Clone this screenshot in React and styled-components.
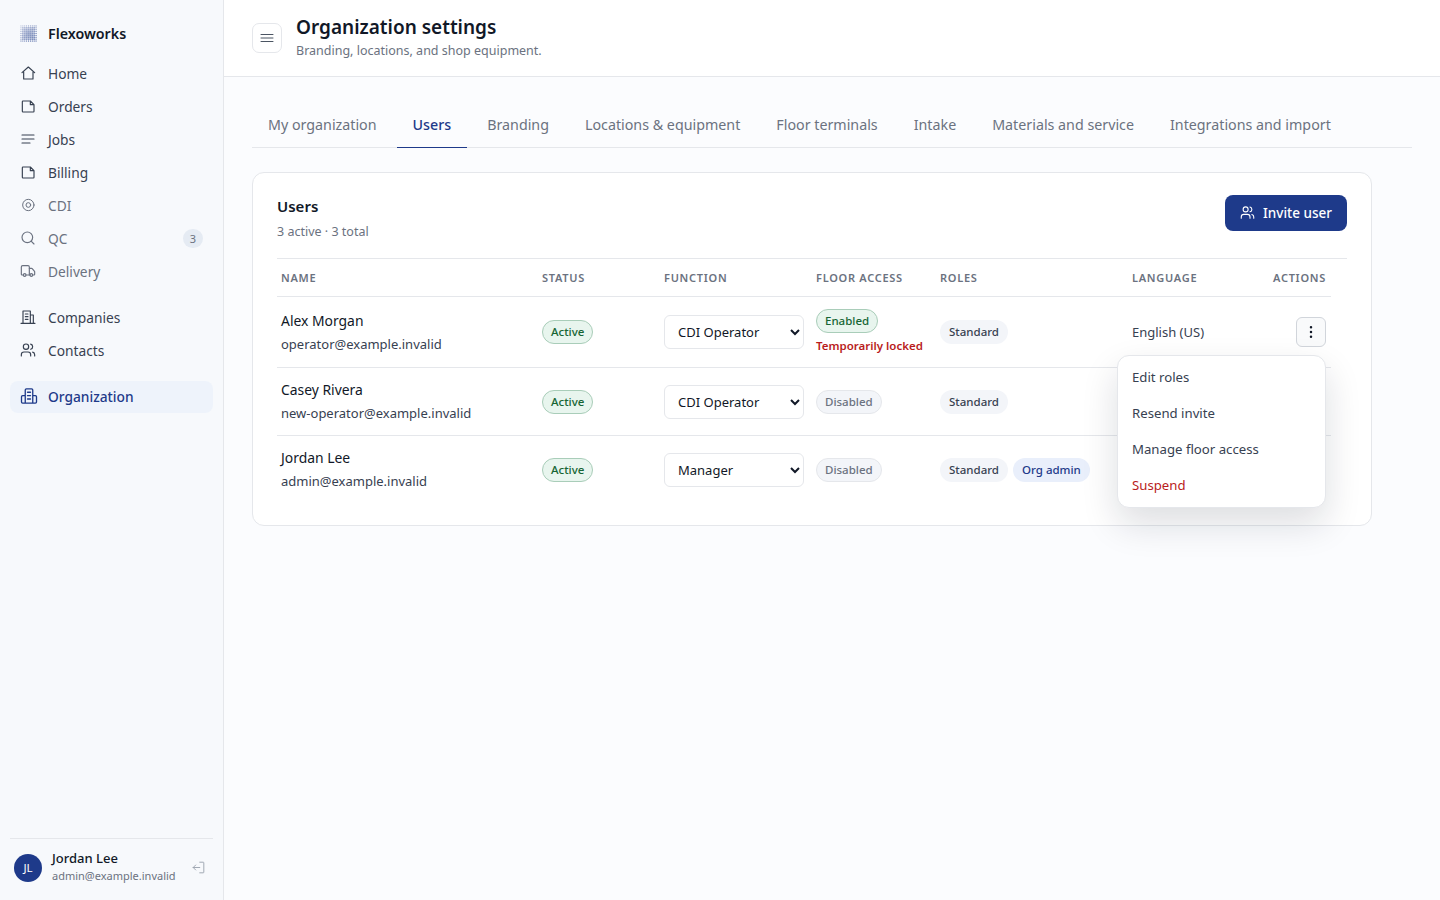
import React from 'react';
import styled, { createGlobalStyle } from 'styled-components';
import { Search, Truck, Users, MoreVertical } from 'lucide-react';

const GlobalStyle = createGlobalStyle`
  html, body { margin: 0; padding: 0; height: 100%; }
  body {
    font-family: "Noto Sans", "Open Sans", sans-serif;
    background: #fbfcfe;
    color: #111827;
  }
  * { box-sizing: border-box; }
`;

// <Icon>: shared wrapper for hand drawn nav icons
const Icon = ({ size = 16, width = 1.75, children }) => (
  <svg width={size} height={size} viewBox="0 0 24 24" fill="none" stroke="currentColor"
    strokeWidth={width} strokeLinecap="round" strokeLinejoin="round">
    {children}
  </svg>
);

const HouseIcon = () => <Icon><path d="M3 11.5 12.5 3 22 11.5M5.5 10V21H19.5V10" /></Icon>;
const PageIcon = () => <Icon><path d="M4.5 4.5H15.5L21 10V20A1 1 0 0 1 20 21H4.5A1 1 0 0 1 3.5 20V5.5A1 1 0 0 1 4.5 4.5ZM15.5 4.5V10H21" /></Icon>;
const LinesIcon = () => <Icon><path d="M3 6H21M3 12H21M3 18H15" /></Icon>;
const TargetIcon = () => (
  <Icon width={1.5}>
    <circle cx="12.5" cy="12" r="8.5" />
    <circle cx="12.5" cy="12" r="3.5" />
  </Icon>
);
const BuildingIcon = () => (
  <Icon>
    <path d="M1.5 21.5H22.5M4.5 21.5V3H15.5V21.5M15.5 9H20V21.5M8 7.5H12M8 11.5H12M8 15.5H12" />
  </Icon>
);
const OrgIcon = () => (
  <Icon size={18}>
    <path d="M7 21.5V4A1.5 1.5 0 0 1 8.5 2.5H15.5A1.5 1.5 0 0 1 17 4V21.5M7 11.5H3.5A1.5 1.5 0 0 0 2 13V20A1.5 1.5 0 0 0 3.5 21.5H20.5A1.5 1.5 0 0 0 22 20V13A1.5 1.5 0 0 0 20.5 11.5H17M10 7H14M10 11.5H14M10 16H14" />
  </Icon>
);
const LeaveIcon = () => (
  <Icon size={15} width={1.5}>
    <path d="M14 3.5H19.5A1 1 0 0 1 20.5 4.5V19.5A1 1 0 0 1 19.5 20.5H14M14 12H3.5M7.5 8 3.5 12 7.5 16" />
  </Icon>
);
const BarsIcon = () => <Icon width={1.5}><path d="M3 6.75H21M3 12H21M3 17.25H21" /></Icon>;

// halftone square: small dark dots at the rim, soft fill in the middle, darker to the lower right
const LogoMark = () => {
  const dots = [];
  for (let y = 0; y < 9; y++) {
    for (let x = 0; x < 9; x++) {
      const edge = Math.min(x, y, 8 - x, 8 - y);
      const size = edge === 0 ? 1 : 1.5 + edge * 0.12;
      const alpha = edge === 0 ? 0.35 + (x + y) * 0.045 : 0.27 + (x + y) * 0.025;
      dots.push(
        <rect key={x + '-' + y} x={x * 2 + 1 - size / 2} y={y * 2 + 1 - size / 2}
          width={size} height={size} fill="#1e3a8a" opacity={alpha} />
      );
    }
  }
  return <svg width="17" height="17" viewBox="0 0 18 18">{dots}</svg>;
};

const NAV_TOP = [
  { label: 'Home', icon: <HouseIcon /> },
  { label: 'Orders', icon: <PageIcon /> },
  { label: 'Jobs', icon: <LinesIcon /> },
  { label: 'Billing', icon: <PageIcon /> },
  { label: 'CDI', icon: <TargetIcon />, muted: true },
  { label: 'QC', icon: <Search size={16} strokeWidth={1.75} />, muted: true, badge: 3 },
  { label: 'Delivery', icon: <Truck size={16} strokeWidth={1.75} />, muted: true },
];

const TABS = ['My organization', 'Users', 'Branding', 'Locations & equipment', 'Floor terminals', 'Intake', 'Materials and service', 'Integrations and import'];

const USERS = [
  { name: 'Alex Morgan', email: 'operator@example.invalid', fn: 'CDI Operator', floor: 'Enabled', locked: true, roles: ['Standard'] },
  { name: 'Casey Rivera', email: 'new-operator@example.invalid', fn: 'CDI Operator', floor: 'Disabled', roles: ['Standard'] },
  { name: 'Jordan Lee', email: 'admin@example.invalid', fn: 'Manager', floor: 'Disabled', roles: ['Standard', 'Org admin'] },
];

export default function App() {
  return (
    <Shell>
      <GlobalStyle />
      <Sidebar>
        <Brand><LogoMark /><span>Flexoworks</span></Brand>
        <NavGroup>
          {NAV_TOP.map((item) => (
            <NavItem key={item.label} $muted={item.muted}>
              {item.icon}
              <span>{item.label}</span>
              {item.badge && <NavBadge>{item.badge}</NavBadge>}
            </NavItem>
          ))}
        </NavGroup>
        <NavGroup>
          <NavItem><BuildingIcon /><span>Companies</span></NavItem>
          <NavItem><Users size={16} strokeWidth={1.75} /><span>Contacts</span></NavItem>
        </NavGroup>
        <NavGroup>
          <NavItem $active><OrgIcon /><span>Organization</span></NavItem>
        </NavGroup>
        <SideFooter>
          <Avatar>JL</Avatar>
          <FooterText>
            <FooterName>Jordan Lee</FooterName>
            <FooterMail>admin@example.invalid</FooterMail>
          </FooterText>
          <LeaveButton><LeaveIcon /></LeaveButton>
        </SideFooter>
      </Sidebar>

      <Content>
        <TopBar>
          <MenuButton><BarsIcon /></MenuButton>
          <TitleBlock>
            <PageTitle>Organization settings</PageTitle>
            <PageSub>Branding, locations, and shop equipment.</PageSub>
          </TitleBlock>
        </TopBar>

        <Main>
          <Tabs>
            {TABS.map((t) => <Tab key={t} $active={t === 'Users'}>{t}</Tab>)}
          </Tabs>

          <Card>
            <CardHead>
              <div>
                <CardTitle>Users</CardTitle>
                <CardSub>3 active · 3 total</CardSub>
              </div>
              <InviteButton><Users size={15} strokeWidth={1.75} />Invite user</InviteButton>
            </CardHead>

            <TableWrap>
              <Table>
                <colgroup>
                  <col style={{ width: 261 }} />
                  <col style={{ width: 122 }} />
                  <col style={{ width: 152 }} />
                  <col style={{ width: 124 }} />
                  <col style={{ width: 192 }} />
                  <col style={{ width: 203 }} />
                </colgroup>
                <thead>
                  <tr>
                    <Th>Name</Th>
                    <Th>Status</Th>
                    <Th>Function</Th>
                    <Th>Floor access</Th>
                    <Th>Roles</Th>
                    <LastTh>
                      <LangHead>
                        <span>Language</span>
                        <span>Actions</span>
                      </LangHead>
                    </LastTh>
                  </tr>
                </thead>
                <tbody>
                  {USERS.map((u, i) => (
                    <Row key={u.email}>
                      <NameTd>
                        <UserName>{u.name}</UserName>
                        <UserMail>{u.email}</UserMail>
                      </NameTd>
                      <Td><Pill $tone="green">Active</Pill></Td>
                      <Td>
                        <FunctionSelect defaultValue={u.fn}>
                          <option>CDI Operator</option>
                          <option>Manager</option>
                        </FunctionSelect>
                      </Td>
                      <Td>
                        <Pill $tone={u.floor === 'Enabled' ? 'green' : 'gray'}>{u.floor}</Pill>
                        {u.locked && <LockNote>Temporarily locked</LockNote>}
                      </Td>
                      <Td>
                        <RoleList>
                          {u.roles.map((r) => <Role key={r} $admin={r === 'Org admin'}>{r}</Role>)}
                        </RoleList>
                      </Td>
                      <LastTd>
                        {/* the open menu covers this cell on the other rows */}
                        {i === 0 && (
                          <LangCell>
                            <span>English (US)</span>
                            <ActionWrap>
                              <KebabButton><MoreVertical size={16} strokeWidth={1.75} /></KebabButton>
                              <RowMenu>
                                <MenuItem>Edit roles</MenuItem>
                                <MenuItem>Resend invite</MenuItem>
                                <MenuItem>Manage floor access</MenuItem>
                                <MenuItem $danger>Suspend</MenuItem>
                              </RowMenu>
                            </ActionWrap>
                          </LangCell>
                        )}
                      </LastTd>
                    </Row>
                  ))}
                </tbody>
              </Table>
            </TableWrap>
          </Card>
        </Main>
      </Content>
    </Shell>
  );
}

// styles
const Shell = styled.div`
  display: flex;
  height: 100vh;
  overflow: hidden;
`;

const Sidebar = styled.aside`
  width: 224px;
  flex: none;
  display: flex;
  flex-direction: column;
  padding: 0 10px;
  background: #f7f9fc;
  border-right: 1px solid #e5e7eb;
`;

const Brand = styled.div`
  display: flex;
  align-items: center;
  gap: 11px;
  height: 57px;
  padding: 9px 0 0 10px;
  font-size: 14.25px;
  font-weight: 600;
  color: #111827;
`;

const NavGroup = styled.nav`
  display: flex;
  flex-direction: column;
  gap: 1px;
  margin-bottom: 14px;
`;

const NavItem = styled.div`
  display: flex;
  align-items: center;
  gap: 12px;
  height: 32px;
  padding: ${(p) => (p.$active ? '0 10px 2px' : '0 10px')};
  margin-top: ${(p) => (p.$active ? '1px' : '0')};
  border-radius: 8px;
  font-size: 13.75px;
  color: ${(p) => (p.$active ? '#1e3a8a' : p.$muted ? '#6b7280' : '#374151')};
  background: ${(p) => (p.$active ? '#eef3fb' : 'transparent')};
  font-weight: ${(p) => (p.$active ? 500 : 400)};
  svg { flex: none; margin-right: ${(p) => (p.$active ? '-2px' : '0')}; }
`;

const NavBadge = styled.span`
  margin-left: auto;
  width: 20px;
  height: 19px;
  border-radius: 10px;
  background: #e5ebf3;
  color: #6b7280;
  font-size: 11px;
  line-height: 19px;
  text-align: center;
`;

const SideFooter = styled.div`
  margin-top: auto;
  height: 62px;
  display: flex;
  align-items: center;
  gap: 10px;
  padding: 0 7px 4px 4px;
  border-top: 1px solid #e5e7eb;
`;

const Avatar = styled.div`
  width: 28px;
  height: 28px;
  flex: none;
  border-radius: 50%;
  background: #1e3a8a;
  color: #fff;
  font-size: 11.5px;
  line-height: 28px;
  text-align: center;
`;

const FooterText = styled.div`
  flex: 1;
  min-width: 0;
  margin-bottom: 3px;
`;

const FooterName = styled.div`
  font-size: 13px;
  font-weight: 500;
  line-height: 18px;
  color: #111827;
`;

const FooterMail = styled.div`
  margin-top: 1px;
  font-size: 11px;
  line-height: 16px;
  color: #6b7280;
  white-space: nowrap;
`;

const LeaveButton = styled.div`
  display: flex;
  color: #9ca3af;
`;

const Content = styled.div`
  flex: 1;
  min-width: 0;
  display: flex;
  flex-direction: column;
`;

const TopBar = styled.header`
  height: 77px;
  flex: none;
  display: flex;
  align-items: center;
  gap: 14px;
  padding: 0 28px;
  background: #fff;
  border-bottom: 1px solid #e5e7eb;
`;

const MenuButton = styled.div`
  width: 30px;
  height: 30px;
  display: flex;
  align-items: center;
  justify-content: center;
  border: 1px solid #e5e7eb;
  border-radius: 7px;
  background: #fff;
  color: #4b5563;
`;

const TitleBlock = styled.div`
  padding-bottom: 3px;
`;

const PageTitle = styled.h1`
  margin: 0;
  font-size: 19px;
  font-weight: 600;
  line-height: 26px;
  color: #111827;
`;

const PageSub = styled.p`
  margin: 1.5px 0 0;
  font-size: 12.5px;
  line-height: 17px;
  color: #6b7280;
`;

const Main = styled.main`
  flex: 1;
  padding: 23px 28px 0;
`;

const Tabs = styled.div`
  display: flex;
  gap: 4px;
  border-bottom: 1px solid #e5e7eb;
`;

const Tab = styled.div`
  height: 48px;
  padding: 0 16px;
  display: flex;
  align-items: center;
  font-size: 14.27px;
  font-weight: ${(p) => (p.$active ? 500 : 400)};
  color: ${(p) => (p.$active ? '#1e3a8a' : '#6b7280')};
  box-shadow: ${(p) => (p.$active ? 'inset 0 -1px 0 #1e3a8a' : 'none')};
  margin-bottom: -1px;
`;

const Card = styled.section`
  width: 1120px;
  margin-top: 24px;
  padding: 22px 24px 22px;
  background: #fff;
  border: 1px solid #e5e7eb;
  border-radius: 12px;
`;

const CardHead = styled.div`
  display: flex;
  justify-content: space-between;
  align-items: flex-start;
  height: 63px;
`;

const CardTitle = styled.h2`
  margin: 0;
  padding-top: 1px;
  font-size: 15px;
  font-weight: 600;
  line-height: 20px;
  color: #111827;
`;

const CardSub = styled.p`
  margin: 7px 0 0;
  font-size: 12.5px;
  line-height: 18px;
  color: #6b7280;
`;

const InviteButton = styled.button`
  height: 36px;
  width: 122px;
  padding: 0 0 1px;
  display: flex;
  align-items: center;
  justify-content: center;
  gap: 8px;
  border: none;
  border-radius: 8px;
  background: #1e3a8a;
  color: #fff;
  font-family: inherit;
  font-size: 13.5px;
  font-weight: 500;
`;

const TableWrap = styled.div`
  border-top: 1px solid #e5e7eb;
`;

const Table = styled.table`
  width: 1054px;
  table-layout: fixed;
  border-collapse: collapse;
`;

const Th = styled.th`
  height: 37px;
  padding: 0 4px;
  text-align: left;
  font-size: 11px;
  font-weight: 600;
  letter-spacing: 0.72px;
  text-transform: uppercase;
  color: #6b7280;
  border-bottom: 1px solid #e5e7eb;
`;

const LastTh = styled(Th)`
  padding-right: 5px;
`;

const LangHead = styled.div`
  display: flex;
  justify-content: space-between;
`;

const Row = styled.tr`
  border-bottom: 1px solid #e5e7eb;
  &:last-child { border-bottom: none; }
`;

const NameTd = styled.td`
  height: 68px;
  padding: 0 4px;
  vertical-align: middle;
  ${Row}:first-child & { height: 71px; }
`;

const Td = styled(NameTd)`
  font-size: 13px;
  color: #374151;
  ${Row}:not(:first-child) & { padding-top: 2px; }
`;

const LastTd = styled(Td)`
  padding-right: 5px;
`;

const UserName = styled.div`
  font-size: 13.9px;
  line-height: 20px;
  color: #111827;
`;

const UserMail = styled.div`
  margin-top: 4px;
  font-size: 13px;
  line-height: 18px;
  color: #374151;
`;

const TONES = {
  green: 'background:#e8f5ee;border-color:#a9cdb9;color:#166534;',
  gray: 'background:#f3f5f9;border-color:#e5e7eb;color:#6b7280;',
};

const Pill = styled.span`
  display: inline-block;
  height: 24px;
  padding: 0 8px;
  border: 1px solid;
  border-radius: 12px;
  font-size: 11.5px;
  font-weight: 500;
  line-height: 22px;
  ${(p) => TONES[p.$tone]}
`;

const LockNote = styled.div`
  margin-top: 5px;
  font-size: 11.5px;
  font-weight: 600;
  line-height: 16px;
  color: #b91c1c;
  white-space: nowrap;
`;

const FunctionSelect = styled.select`
  width: 140px;
  height: 34px;
  padding: 0 0 0 9px;
  border: 1px solid #e5e7eb;
  border-radius: 6px;
  background: #fff;
  color: #111827;
  font-family: inherit;
  font-size: 13px;
`;

const RoleList = styled.div`
  display: flex;
  gap: 5px;
`;

const Role = styled.span`
  height: 24px;
  padding: 0 9px;
  border-radius: 12px;
  font-size: 11.5px;
  font-weight: 500;
  line-height: 24px;
  background: ${(p) => (p.$admin ? '#e9effb' : '#f3f5f9')};
  color: ${(p) => (p.$admin ? '#1e3a8a' : '#374151')};
`;

const LangCell = styled.div`
  display: flex;
  align-items: center;
  justify-content: space-between;
`;

const ActionWrap = styled.div`
  position: relative;
`;

const KebabButton = styled.div`
  width: 30px;
  height: 30px;
  display: flex;
  align-items: center;
  justify-content: center;
  border: 1px solid #d1d5db;
  border-radius: 6px;
  background: #f9fafb;
  color: #111827;
`;

const RowMenu = styled.div`
  position: absolute;
  z-index: 5;
  top: 38px;
  right: 0;
  width: 209px;
  padding: 3px 0 4px;
  background: #fff;
  border: 1px solid #e5e7eb;
  border-radius: 12px;
  box-shadow: 0 16px 36px rgba(17, 24, 39, 0.14);
`;

const MenuItem = styled.div`
  height: 36px;
  padding: 0 14px;
  display: flex;
  align-items: center;
  font-size: 13.2px;
  color: ${(p) => (p.$danger ? '#b91c1c' : '#374151')};
`;
